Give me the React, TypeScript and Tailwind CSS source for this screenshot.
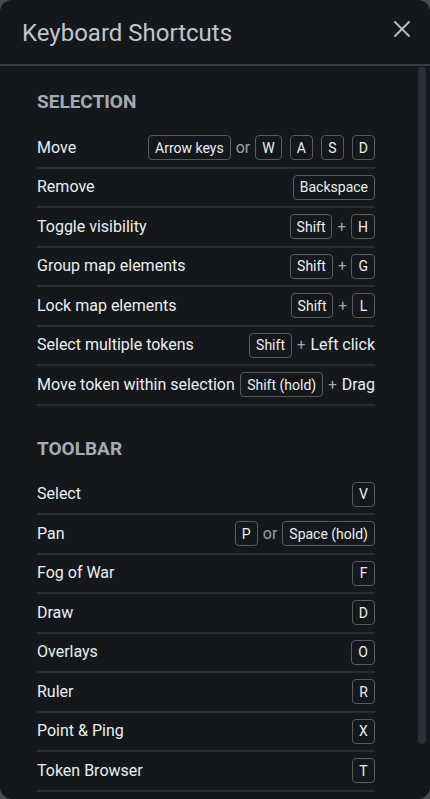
import React from 'react';
import { X } from 'lucide-react';

type Part = { k?: string; t?: string; sep?: string };

interface Shortcut {
  label: string;
  keys: Part[];
}

const selection: Shortcut[] = [
  { label: 'Move', keys: [{ k: 'Arrow keys' }, { sep: 'or' }, { k: 'W' }, { k: 'A' }, { k: 'S' }, { k: 'D' }] },
  { label: 'Remove', keys: [{ k: 'Backspace' }] },
  { label: 'Toggle visibility', keys: [{ k: 'Shift' }, { sep: '+' }, { k: 'H' }] },
  { label: 'Group map elements', keys: [{ k: 'Shift' }, { sep: '+' }, { k: 'G' }] },
  { label: 'Lock map elements', keys: [{ k: 'Shift' }, { sep: '+' }, { k: 'L' }] },
  { label: 'Select multiple tokens', keys: [{ k: 'Shift' }, { sep: '+' }, { t: 'Left click' }] },
  { label: 'Move token within selection', keys: [{ k: 'Shift (hold)' }, { sep: '+' }, { t: 'Drag' }] },
];

const toolbar: Shortcut[] = [
  { label: 'Select', keys: [{ k: 'V' }] },
  { label: 'Pan', keys: [{ k: 'P' }, { sep: 'or' }, { k: 'Space (hold)' }] },
  { label: 'Fog of War', keys: [{ k: 'F' }] },
  { label: 'Draw', keys: [{ k: 'D' }] },
  { label: 'Overlays', keys: [{ k: 'O' }] },
  { label: 'Ruler', keys: [{ k: 'R' }] },
  { label: 'Point & Ping', keys: [{ k: 'X' }] },
  { label: 'Token Browser', keys: [{ k: 'T' }] },
];

function Key({ children }: { children: React.ReactNode }) {
  return (
    <span className="h-[25px] min-w-[23px] px-[6px] flex items-center justify-center rounded-[4px] border border-[#565b62] text-[14px] text-[#eceef0] leading-none">
      {children}
    </span>
  );
}

function KeyCombo({ parts }: { parts: Part[] }) {
  const out: React.ReactNode[] = [];
  parts.forEach((p, i) => {
    if (p.k) {
      const prev = parts[i - 1];
      const spacing = prev && prev.k ? 'ml-[8px]' : '';
      out.push(
        <span key={i} className={spacing}>
          <Key>{p.k}</Key>
        </span>
      );
    } else if (p.sep) {
      out.push(
        <span key={i} className={p.sep === 'or' ? 'mx-[5px] text-[16px] text-[#9a9fa5]' : 'mx-[5px] text-[15px] text-[#a3a8ae]'}>
          {p.sep}
        </span>
      );
    } else if (p.t) {
      out.push(
        <span key={i} className="text-[16px] text-[#eceef0]">
          {p.t}
        </span>
      );
    }
  });
  return <div className="flex items-center">{out}</div>;
}

function Section({ title, items, className }: { title: string; items: Shortcut[]; className?: string }) {
  return (
    <div className={className}>
      <h3 className="text-[19px] leading-[20px] font-bold text-[#a7acb2] mb-[17px]">{title}</h3>
      <div>
        {items.map((s) => (
          <div key={s.label} className="h-[39.5px] flex items-center justify-between border-b-2 border-[#2a2e33]">
            <span className="text-[16px] text-[#eceef0]">{s.label}</span>
            <KeyCombo parts={s.keys} />
          </div>
        ))}
      </div>
    </div>
  );
}

export default function App() {
  return (
    <div className="w-[430px] h-[799px] bg-[#4a4b4d] overflow-hidden" style={{ fontFamily: 'Roboto, "Noto Sans", sans-serif' }}>
      <div className="w-full h-full rounded-[12px] bg-[#14181c] overflow-hidden flex flex-col">
        <div className="h-[66px] shrink-0 flex items-center justify-between pl-[22px] pr-[14px] border-b-2 border-[#3a3f44]">
          <h2 className="text-[24px] text-[#c2c6cb] pt-[1px]">Keyboard Shortcuts</h2>
          <button className="text-[#b9bdc2] -mt-[6px]">
            <X size={28} strokeWidth={1.6} />
          </button>
        </div>
        <div className="flex-1 flex min-h-0">
          <div className="flex-1 pl-[37px] pr-[43px] pt-[26px] overflow-hidden">
            <Section title="SELECTION" items={selection} />
            <Section title="TOOLBAR" items={toolbar} className="mt-[33px]" />
          </div>
          <div className="w-[8px] mr-[4px] pt-[1px]">
            <div className="h-[677px] rounded-full bg-[#2a3036]" />
          </div>
        </div>
      </div>
    </div>
  );
}
